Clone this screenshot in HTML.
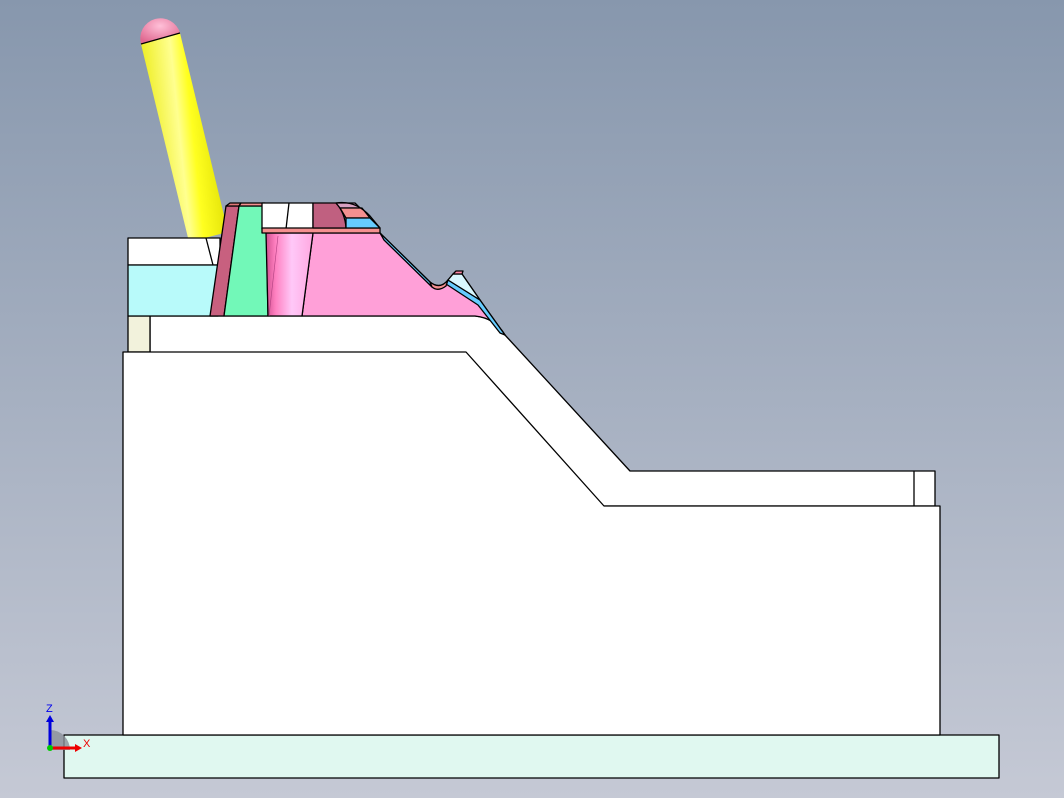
<!DOCTYPE html>
<html><head><style>
html,body{margin:0;padding:0;width:1064px;height:798px;overflow:hidden}
body{background:linear-gradient(#8797ad,#c5c9d5)}
svg{position:absolute;left:0;top:0}
</style></head><body>
<svg width="1064" height="798" viewBox="0 0 1064 798" stroke="#000" stroke-width="1.3" stroke-linejoin="round">
<defs>
<linearGradient id="yl" x1="0" y1="0" x2="1" y2="0" gradientTransform="rotate(-14 .5 .5)">
<stop offset="0" stop-color="#e8e800"/><stop offset=".45" stop-color="#ffff90"/><stop offset=".6" stop-color="#ffff20"/><stop offset="1" stop-color="#d8d800"/></linearGradient>
<linearGradient id="pk" x1="0" x2="1"><stop offset="0" stop-color="#d05090"/><stop offset=".2" stop-color="#ff80c0"/><stop offset=".55" stop-color="#ffc8f8"/><stop offset="1" stop-color="#ffa8e0"/></linearGradient>
<radialGradient id="cap" cx=".5" cy=".3" r=".7"><stop offset="0" stop-color="#ffc0d8"/><stop offset="1" stop-color="#e06890"/></radialGradient>
</defs>
<polygon points="141,44 180,33 228,232 189,242" fill="url(#yl)" stroke="none"/>
<path d="M141,44 A20,20 0 0 1 180,33 Z" fill="url(#cap)" stroke="none"/>
<path d="M141,44 L180,33" fill="none"/>
<rect x="64" y="735" width="935" height="43" fill="#e0f8f0"/>
<path d="M150,316 L475,316 Q495,318 505,335 L630,471 L935,471 L935,506 L150,506 Z" fill="#fff"/>
<rect x="128" y="316" width="22" height="36" fill="#f2f2dc"/>
<line x1="914" y1="471" x2="914" y2="506"/>
<polygon points="123,352 466,352 604,506 940,506 940,735 123,735" fill="#fff"/>
<rect x="128" y="238" width="92" height="27" fill="#fff"/>
<rect x="128" y="265" width="90" height="51" fill="#b8fafa"/>
<line x1="206" y1="238" x2="213" y2="265"/>
<path d="M302,316 L313,233 L380,233 L430,282 Q440,290 448,280 L453,274 L462,274 L480,300 L505,335 Q495,318 475,316 Z" fill="#ffa0d8"/>
<path d="M380,233 L430,282 L432,287 L384,240 Z" fill="#66ccff"/>
<path d="M448,280 L480,300 L505,335 L500,333 L478,305 L446,284 Z" fill="#66ccff"/>
<path d="M430,282 Q440,290 448,280 L446,286 Q438,292 432,287 Z" fill="#f49090"/>
<path d="M448,280 L453,274 L462,274 L480,300 Z" fill="#d8f8ff"/>
<path d="M453,274 L462,274 L463,271 L456,271 Z" fill="#ff88a8"/>
<polygon points="210,316 226,206 239,206 224,316" fill="#c8607f"/>
<polygon points="226,206 230,203 241,203 239,206" fill="#e07878"/>
<polygon points="224,316 239,206 266,206 268,316" fill="#72f8b8"/>
<polygon points="239,206 241,203 265,203 266,206" fill="#f49090"/>
<polygon points="266,233 313,233 302,316 268,316" fill="url(#pk)"/>
<line x1="278" y1="236" x2="269" y2="316" stroke-width=".6" stroke="#b04080"/>
<rect x="262" y="203" width="51" height="26" fill="#fff"/>
<line x1="289" y1="203" x2="286" y2="229"/>
<rect x="262" y="228" width="118" height="5" fill="#f49090"/>
<path d="M313,203 L336,203 Q345,213 346,228 L313,228 Z" fill="#c06080"/>
<path d="M336,203 L355,203 L360,208 L340,208 Z" fill="#d8a0c0"/>
<path d="M340,208 L362,208 L370,218 L346,218 Z" fill="#f49090"/>
<path d="M346,218 L370,218 L380,228 L346,228 Z" fill="#66ccff"/>
<path d="M336,203 Q355,200 370,216 L380,228" fill="none"/>
<path d="M50,750 L50,730 A20,20 0 0 1 70,750 Z" fill="#8a8e98" stroke="none" opacity=".8"/>
<line x1="50" y1="748" x2="50" y2="720" stroke="#0000dd" stroke-width="3"/>
<polygon points="46,722 54,722 50,715" fill="#0000dd" stroke="none"/>
<line x1="50" y1="748" x2="76" y2="748" stroke="#ee0000" stroke-width="3"/>
<polygon points="75,744 75,752 82,748" fill="#ee0000" stroke="none"/>
<circle cx="50" cy="748" r="3" fill="#00cc00" stroke="none"/>
<text x="46" y="712" font-family="Liberation Sans,sans-serif" font-size="11" fill="#0000ee" stroke="none">Z</text>
<text x="83" y="747" font-family="Liberation Sans,sans-serif" font-size="11" fill="#ee0000" stroke="none">X</text>
</svg>
</body></html>
